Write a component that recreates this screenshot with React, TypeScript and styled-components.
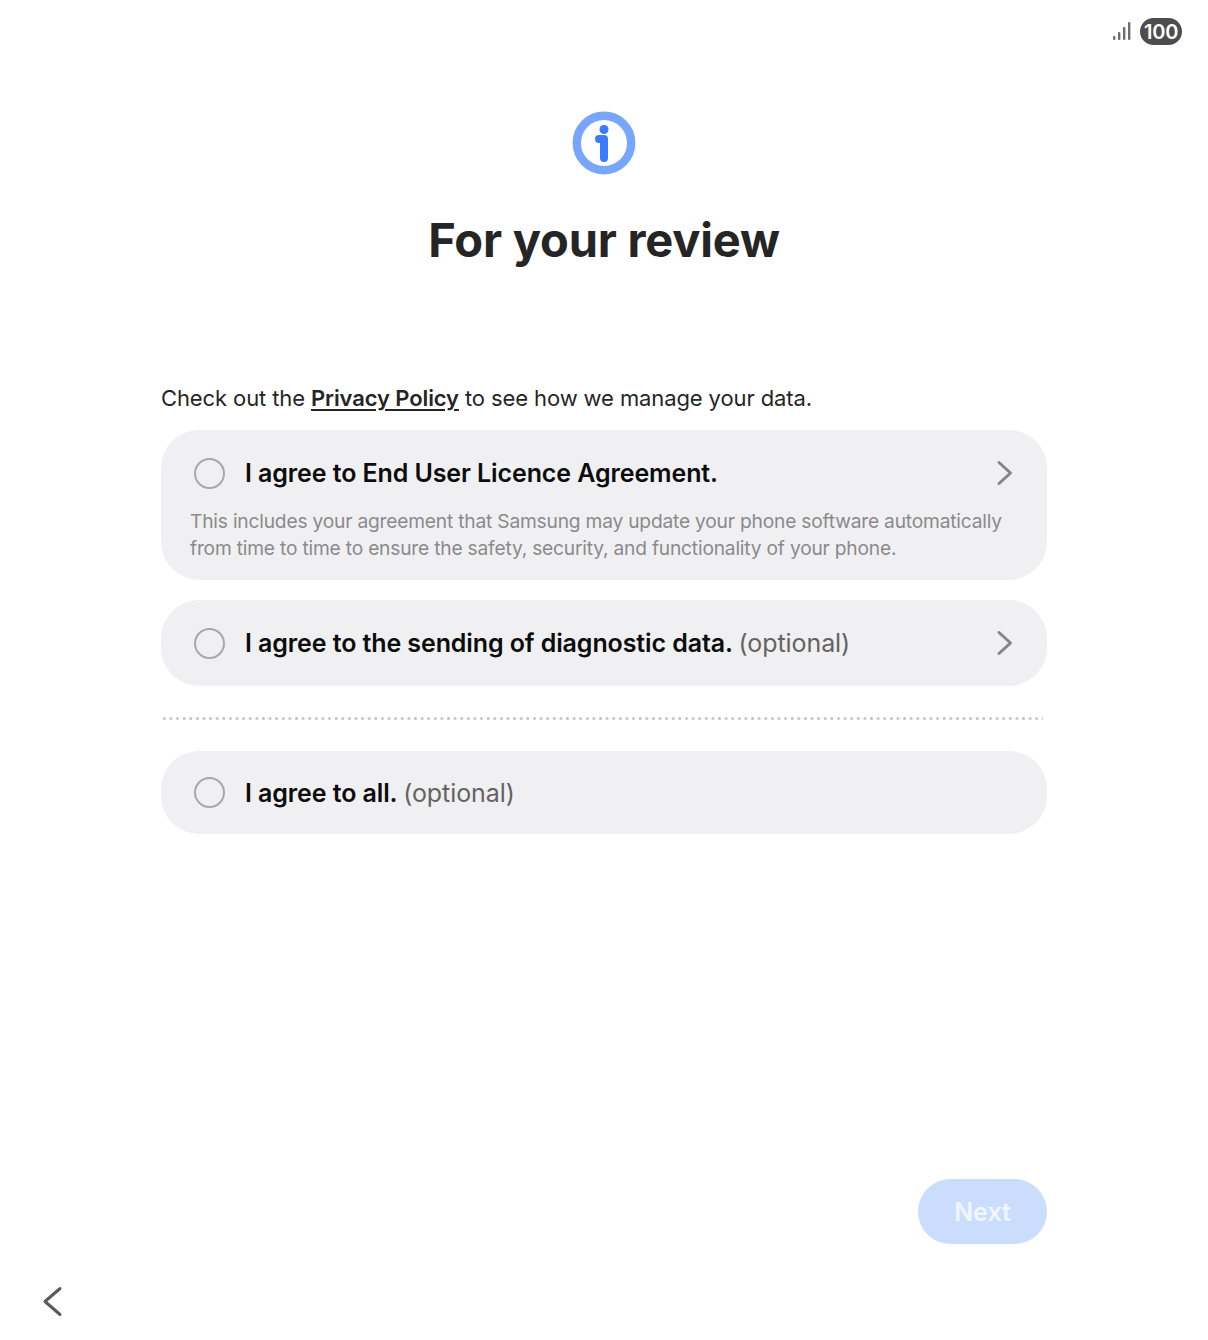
import styled, { createGlobalStyle } from 'styled-components';

const GlobalStyle = createGlobalStyle`
  html, body {
    margin: 0;
    padding: 0;
    background: #fff;
    font-family: Inter, "Noto Sans", sans-serif;
  }
`;

const Page = styled.div`
  width: 1208px;
  height: 1340px;
  display: flex;
  flex-direction: column;
  overflow: hidden;
  background: #fff;
`;

const StatusBar = styled.div`
  height: 111px;
  padding: 18px 26px 0 0;
  box-sizing: border-box;
  display: flex;
  justify-content: flex-end;
  align-items: flex-start;
  gap: 8px;
`;

const Signal = styled.svg`
  width: 20px;
  height: 20px;
  margin-top: 3px;
`;

const Battery = styled.div`
  width: 42px;
  height: 27px;
  border-radius: 14px;
  background: #4d4d4d;
  color: #fff;
  font-size: 20px;
  font-weight: 600;
  line-height: 28px;
  text-align: center;
  letter-spacing: -0.2px;
`;

const Header = styled.header`
  display: flex;
  flex-direction: column;
  align-items: center;
  height: 270px;
`;

const InfoIcon = styled.svg`
  width: 64px;
  height: 64px;
`;

const Title = styled.h1`
  margin: 36px 0 0;
  font-size: 47px;
  font-weight: 700;
  line-height: 57px;
  color: #252525;
  letter-spacing: -0.2px;
`;

const Content = styled.main`
  margin: 0 161px;
  display: flex;
  flex-direction: column;
  flex: 1;
`;

const Intro = styled.p`
  margin: 0 0 15px;
  font-size: 22px;
  line-height: 34px;
  height: 34px;
  color: #252525;
  letter-spacing: -0.11px;

  a {
    font-weight: 600;
    color: #252525;
    text-decoration: underline;
    text-underline-offset: 3px;
  }
`;

const Card = styled.section<{ $height: number }>`
  height: ${(p) => p.$height}px;
  box-sizing: border-box;
  border-radius: 38px;
  background: #f0f0f2;
  padding: 0 32px 0 33px;
  display: flex;
  flex-direction: column;
  justify-content: center;
`;

const DetailCard = styled(Card)`
  padding: 27px 32px 0 29px;
  justify-content: flex-start;
  margin-bottom: 20px;
`;

const Row = styled.div`
  display: flex;
  align-items: center;
`;

const DetailRow = styled(Row)`
  margin-left: 4px;
`;

const Radio = styled.span`
  width: 31px;
  height: 31px;
  box-sizing: border-box;
  border: 2px solid #a8a8a8;
  border-radius: 50%;
  flex: none;
  margin-right: 20px;
`;

const Label = styled.span`
  flex: 1;
  font-size: 25px;
  line-height: 32px;
  font-weight: 600;
  color: #0c0c0c;
  letter-spacing: -0.1px;
`;

const Optional = styled.span`
  font-weight: 400;
  color: #636363;
  letter-spacing: -0.08px;
`;

const Chevron = styled.svg`
  width: 20px;
  height: 28px;
  flex: none;
`;

const Description = styled.p`
  margin: 19px 0 0;
  font-size: 19.2px;
  line-height: 26.5px;
  color: #8a8a8c;
  letter-spacing: -0.2px;
  white-space: nowrap;
`;

const Dots = styled.div`
  height: 3px;
  margin: 31px 4px 31px 0;
  background-image: radial-gradient(circle, #c4c4c4 1.3px, transparent 1.5px);
  background-size: 6.62px 3px;
  background-repeat: repeat-x;
`;

const Spacer = styled.div`
  flex: 1;
`;

const NextButton = styled.button`
  align-self: flex-end;
  width: 129px;
  height: 65px;
  border: 0;
  border-radius: 33px;
  background: #cbddfd;
  color: #f1f6ff;
  font-family: inherit;
  font-size: 25px;
  font-weight: 600;
  margin-bottom: 27px;
`;

const BottomBar = styled.footer`
  height: 69px;
  box-sizing: border-box;
  padding: 14px 0 0 41px;
`;

const BackIcon = styled.svg`
  width: 24px;
  height: 32px;
  display: block;
`;

const ChevronRight = () => (
  <Chevron viewBox="0 0 20 28" fill="none">
    <path d="M4 3.5 L15.5 14 L4 24.5" stroke="#858585" strokeWidth="3" strokeLinecap="round" strokeLinejoin="round" />
  </Chevron>
);

const App = () => (
  <Page>
    <GlobalStyle />
    <StatusBar>
      <Signal viewBox="0 0 20 20" fill="#6e6e6e">
        <rect x="1" y="15" width="2.4" height="4" rx="1" />
        <rect x="6" y="11" width="2.4" height="8" rx="1" />
        <rect x="11" y="6" width="2.4" height="13" rx="1" />
        <rect x="16" y="1" width="2.4" height="18" rx="1" />
      </Signal>
      <Battery>100</Battery>
    </StatusBar>
    <Header>
      <InfoIcon viewBox="0 0 64 64" fill="none">
        <circle cx="32" cy="32" r="27.2" stroke="#78a6ff" strokeWidth="8.4" />
        <circle cx="32" cy="18.5" r="4.5" fill="#3b7bff" />
        <path d="M27 28 H32 V47" stroke="#3b7bff" strokeWidth="8" strokeLinecap="round" strokeLinejoin="round" />
      </InfoIcon>
      <Title>For your review</Title>
    </Header>
    <Content>
      <Intro>
        Check out the <a href="#privacy">Privacy Policy</a> to see how we manage your data.
      </Intro>
      <DetailCard $height={150}>
        <DetailRow>
          <Radio />
          <Label>I agree to End User Licence Agreement.</Label>
          <ChevronRight />
        </DetailRow>
        <Description>
          This includes your agreement that Samsung may update your phone software automatically
          <br />
          from time to time to ensure the safety, security, and functionality of your phone.
        </Description>
      </DetailCard>
      <Card $height={86}>
        <Row>
          <Radio />
          <Label>
            I agree to the sending of diagnostic data. <Optional>(optional)</Optional>
          </Label>
          <ChevronRight />
        </Row>
      </Card>
      <Dots />
      <Card $height={83}>
        <Row>
          <Radio />
          <Label>
            I agree to all. <Optional>(optional)</Optional>
          </Label>
        </Row>
      </Card>
      <Spacer />
      <NextButton>Next</NextButton>
    </Content>
    <BottomBar>
      <BackIcon viewBox="0 0 24 32" fill="none">
        <path d="M19 3.5 L4 16.5 L19 29.5" stroke="#5a5a5a" strokeWidth="3" strokeLinecap="round" strokeLinejoin="round" />
      </BackIcon>
    </BottomBar>
  </Page>
);

export default App;
